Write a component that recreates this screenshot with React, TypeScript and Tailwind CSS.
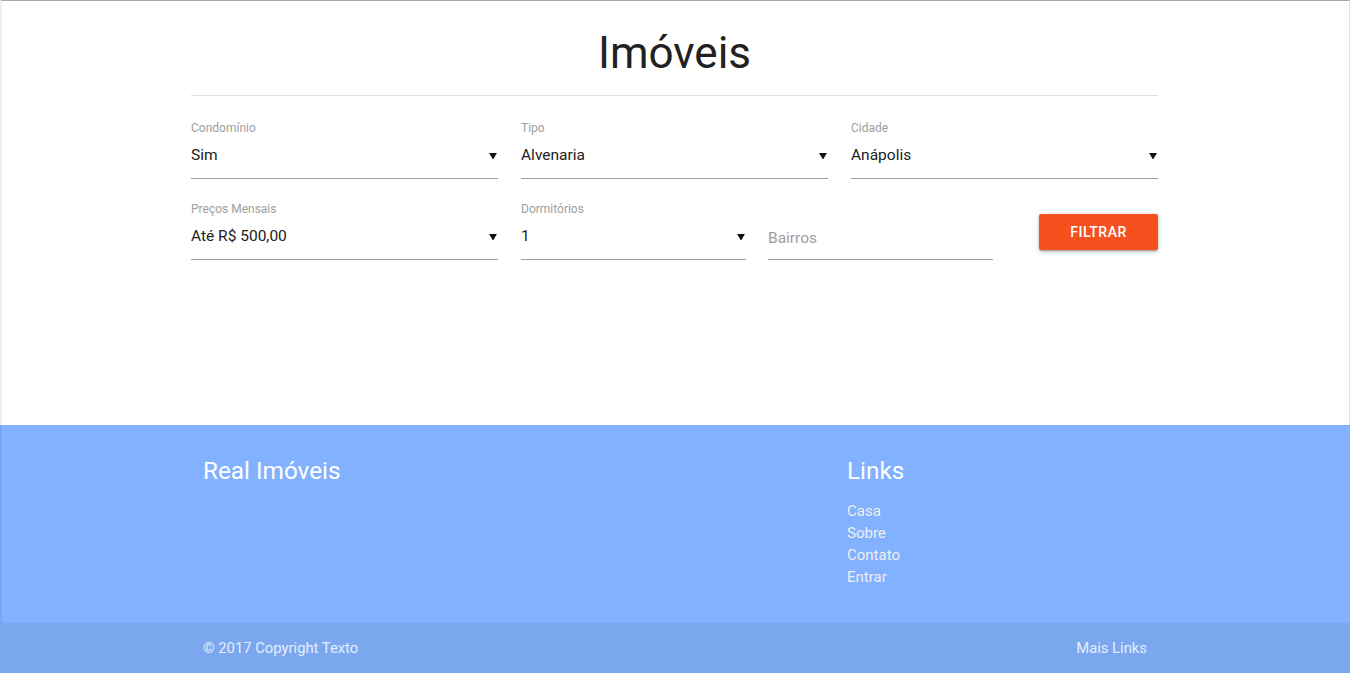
import React from "react";

// Listagem de imóveis — filtros + rodapé
const Arrow = () => (
  <svg width="8" height="8" viewBox="0 0 8 8" className="shrink-0">
    <polygon points="0,1 8,1 4,7.5" fill="#111" />
  </svg>
);

function SelectField({
  label,
  value,
  className,
}: {
  label: string;
  value: string;
  className: string;
}) {
  return (
    <div className={className}>
      <p className="text-[12px] leading-4 text-[#9e9e9e]">{label}</p>
      <div className="h-[43px] flex items-center justify-between pb-[2px] pr-[1px] border-b border-[#9e9e9e]">
        <span className="text-[15.5px] text-[#212121]">{value}</span>
        <Arrow />
      </div>
    </div>
  );
}

export default function App() {
  return (
    <div className="w-[1350px] h-[673px] overflow-hidden bg-white font-['Roboto','Liberation_Sans',sans-serif]">
      <main className="h-[425px] border-t border-[#a8a8a8] border-l-2 border-l-black/[0.06] border-r border-r-[#e2e2e2]">
        <div className="w-[967px] ml-[189px]">
          <h1 className="pt-[24px] h-[80px] text-center text-[44px] leading-[56px] text-[#212121]">
            Imóveis
          </h1>
          <hr className="mt-[14px] border-t border-[#e0e0e0]" />
          <div className="mt-[24px] flex gap-[23px]">
            <SelectField label="Condomínio" value="Sim" className="w-[307px]" />
            <SelectField label="Tipo" value="Alvenaria" className="w-[307px]" />
            <SelectField label="Cidade" value="Anápolis" className="w-[307px]" />
          </div>
          <div className="mt-[22px] flex items-start">
            <SelectField label="Preços Mensais" value="Até R$ 500,00" className="w-[307px]" />
            <SelectField label="Dormitórios" value="1" className="w-[225px] ml-[23px]" />
            <div className="w-[225px] ml-[22px] pt-4">
              <div className="h-[43px] flex items-center pt-[2px] border-b border-[#9e9e9e]">
                <span className="text-[15.5px] text-[#9e9e9e]">Bairros</span>
              </div>
            </div>
            <button className="ml-[46px] mt-[13px] w-[119px] h-[36px] rounded-[2px] bg-[#f4511e] text-white text-[14px] font-medium tracking-[0.5px] shadow-[0_2px_2px_rgba(0,0,0,0.14),0_3px_1px_-2px_rgba(0,0,0,0.12),0_1px_5px_rgba(0,0,0,0.2)]">
              FILTRAR
            </button>
          </div>
        </div>
      </main>
      <footer className="bg-[#82b1ff] border-l-2 border-l-black/[0.06] text-white">
        <div className="h-[198px] w-[945px] ml-[201px] flex pt-[32px]">
          <div className="w-[644px]">
            <h5 className="text-[24.3px] leading-7">Real Imóveis</h5>
          </div>
          <div>
            <h5 className="text-[24.3px] leading-7">Links</h5>
            <ul className="mt-[15px] text-[15px] leading-[22px] text-[#eeeeee]">
              <li>Casa</li>
              <li>Sobre</li>
              <li>Contato</li>
              <li>Entrar</li>
            </ul>
          </div>
        </div>
        <div className="h-[50px] bg-[#333333]/[0.08]">
          <div className="w-[944px] ml-[201px] h-full flex items-center justify-between text-[14.8px] text-white/80">
            <span>© 2017 Copyright Texto</span>
            <span>Mais Links</span>
          </div>
        </div>
      </footer>
    </div>
  );
}
